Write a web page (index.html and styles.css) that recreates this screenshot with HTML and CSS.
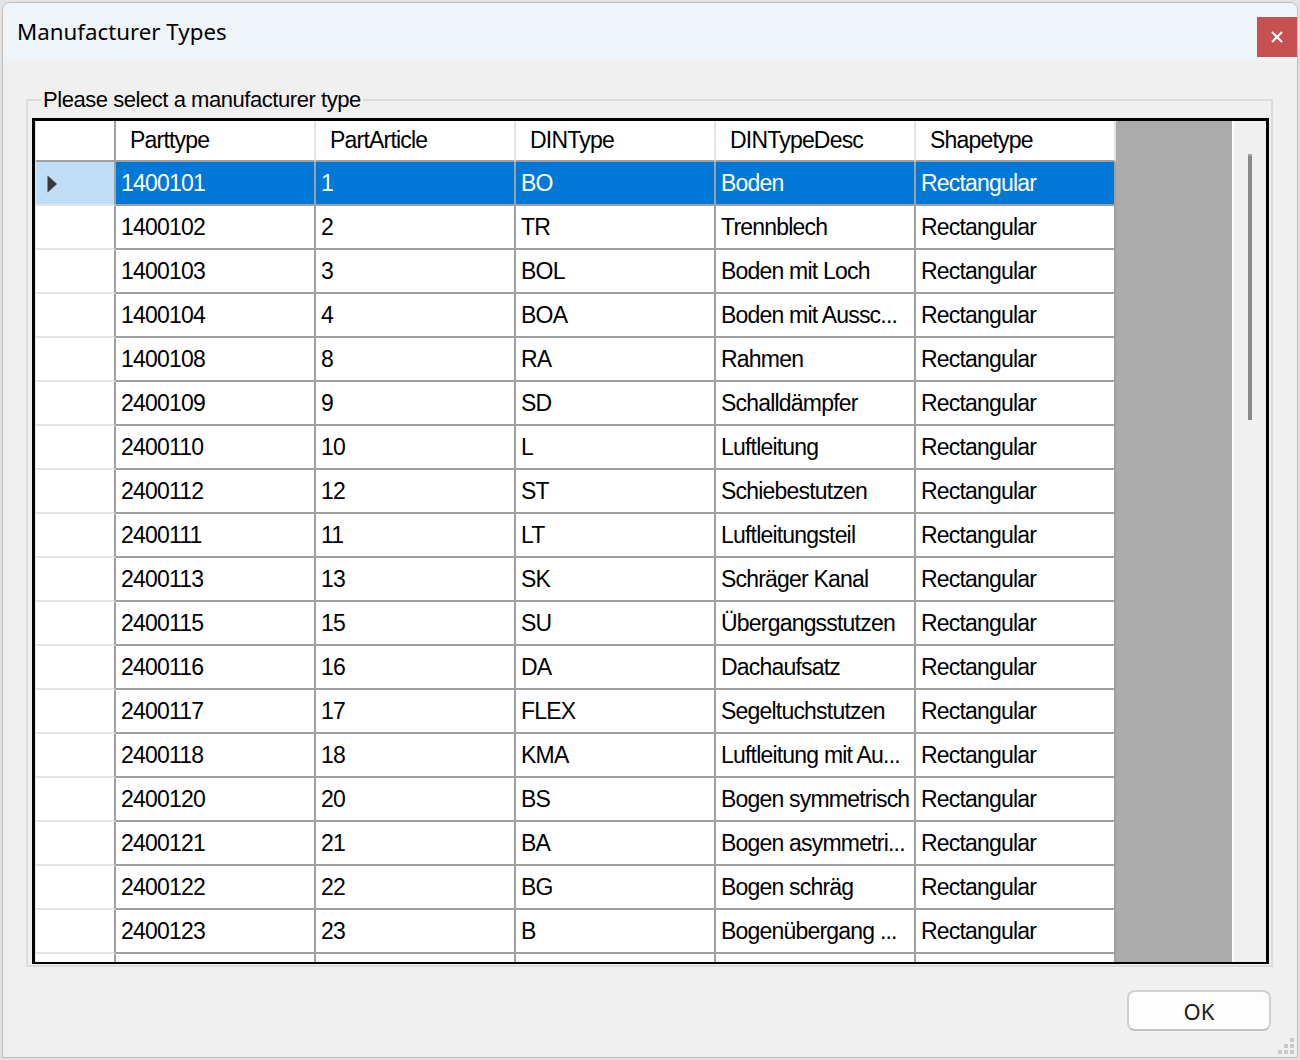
FILE: index.html
```html
<!DOCTYPE html>
<html lang="en">
<head>
<meta charset="utf-8">
<title>Manufacturer Types</title>
<link rel="stylesheet" href="styles.css">
</head>
<body>
<div class="window">
  <div class="titlebar">
    <div class="title">Manufacturer Types</div>
    <div class="close" aria-label="Close">
      <svg width="12" height="12" viewBox="0 0 12 12"><path d="M1 1 L11 11 M11 1 L1 11" stroke="#fff" stroke-width="2.2" fill="none"/></svg>
    </div>
  </div>
  <div class="content">
    <fieldset class="group">
      <legend>Please select a manufacturer type</legend>
      <div class="grid">
        <div class="table">
          <div class="row head">
            <div class="cell rh"></div>
            <div class="cell">Parttype</div>
            <div class="cell">PartArticle</div>
            <div class="cell">DINType</div>
            <div class="cell">DINTypeDesc</div>
            <div class="cell">Shapetype</div>
          </div>
          <div class="row sel">
            <div class="cell rh"><svg class="arrow" width="11" height="18" viewBox="0 0 11 18"><path d="M0.5 0.5 L10 9 L0.5 17.5 Z" fill="#3a3a3a"/></svg></div>
            <div class="cell">1400101</div><div class="cell">1</div><div class="cell">BO</div><div class="cell">Boden</div><div class="cell">Rectangular</div>
          </div>
          <div class="row"><div class="cell rh"></div><div class="cell">1400102</div><div class="cell">2</div><div class="cell">TR</div><div class="cell">Trennblech</div><div class="cell">Rectangular</div></div>
          <div class="row"><div class="cell rh"></div><div class="cell">1400103</div><div class="cell">3</div><div class="cell">BOL</div><div class="cell">Boden mit Loch</div><div class="cell">Rectangular</div></div>
          <div class="row"><div class="cell rh"></div><div class="cell">1400104</div><div class="cell">4</div><div class="cell">BOA</div><div class="cell">Boden mit Aussc...</div><div class="cell">Rectangular</div></div>
          <div class="row"><div class="cell rh"></div><div class="cell">1400108</div><div class="cell">8</div><div class="cell">RA</div><div class="cell">Rahmen</div><div class="cell">Rectangular</div></div>
          <div class="row"><div class="cell rh"></div><div class="cell">2400109</div><div class="cell">9</div><div class="cell">SD</div><div class="cell">Schalldämpfer</div><div class="cell">Rectangular</div></div>
          <div class="row"><div class="cell rh"></div><div class="cell">2400110</div><div class="cell">10</div><div class="cell">L</div><div class="cell">Luftleitung</div><div class="cell">Rectangular</div></div>
          <div class="row"><div class="cell rh"></div><div class="cell">2400112</div><div class="cell">12</div><div class="cell">ST</div><div class="cell">Schiebestutzen</div><div class="cell">Rectangular</div></div>
          <div class="row"><div class="cell rh"></div><div class="cell">2400111</div><div class="cell">11</div><div class="cell">LT</div><div class="cell">Luftleitungsteil</div><div class="cell">Rectangular</div></div>
          <div class="row"><div class="cell rh"></div><div class="cell">2400113</div><div class="cell">13</div><div class="cell">SK</div><div class="cell">Schräger Kanal</div><div class="cell">Rectangular</div></div>
          <div class="row"><div class="cell rh"></div><div class="cell">2400115</div><div class="cell">15</div><div class="cell">SU</div><div class="cell">Übergangsstutzen</div><div class="cell">Rectangular</div></div>
          <div class="row"><div class="cell rh"></div><div class="cell">2400116</div><div class="cell">16</div><div class="cell">DA</div><div class="cell">Dachaufsatz</div><div class="cell">Rectangular</div></div>
          <div class="row"><div class="cell rh"></div><div class="cell">2400117</div><div class="cell">17</div><div class="cell">FLEX</div><div class="cell">Segeltuchstutzen</div><div class="cell">Rectangular</div></div>
          <div class="row"><div class="cell rh"></div><div class="cell">2400118</div><div class="cell">18</div><div class="cell">KMA</div><div class="cell">Luftleitung mit Au...</div><div class="cell">Rectangular</div></div>
          <div class="row"><div class="cell rh"></div><div class="cell">2400120</div><div class="cell">20</div><div class="cell">BS</div><div class="cell">Bogen symmetrisch</div><div class="cell">Rectangular</div></div>
          <div class="row"><div class="cell rh"></div><div class="cell">2400121</div><div class="cell">21</div><div class="cell">BA</div><div class="cell">Bogen asymmetri...</div><div class="cell">Rectangular</div></div>
          <div class="row"><div class="cell rh"></div><div class="cell">2400122</div><div class="cell">22</div><div class="cell">BG</div><div class="cell">Bogen schräg</div><div class="cell">Rectangular</div></div>
          <div class="row"><div class="cell rh"></div><div class="cell">2400123</div><div class="cell">23</div><div class="cell">B</div><div class="cell">Bogenübergang ...</div><div class="cell">Rectangular</div></div>
          <div class="row"><div class="cell rh"></div><div class="cell"></div><div class="cell"></div><div class="cell"></div><div class="cell"></div><div class="cell"></div></div>
        </div>
        <div class="empty"></div>
        <div class="vscroll"><div class="thumb"></div></div>
      </div>
    </fieldset>
    <div class="actions">
      <button class="ok" type="button">OK</button>
    </div>
  </div>
  <svg class="grip" width="16" height="16" viewBox="0 0 16 16">
    <rect x="12" y="0" width="4" height="4" fill="#c8c8c8"/>
    <rect x="6" y="6" width="4" height="4" fill="#c8c8c8"/>
    <rect x="12" y="6" width="4" height="4" fill="#c8c8c8"/>
    <rect x="0" y="12" width="4" height="4" fill="#c8c8c8"/>
    <rect x="6" y="12" width="4" height="4" fill="#c8c8c8"/>
    <rect x="12" y="12" width="4" height="4" fill="#c8c8c8"/>
  </svg>
</div>
</body>
</html>
```

FILE: styles.css
```css
html, body {
  margin: 0;
  padding: 0;
}

body {
  width: 1300px;
  height: 1060px;
  overflow: hidden;
  background: #e2e2e2;
}

.window {
  position: relative;
  margin: 2px 0 0 2px;
  width: 1296px;
  height: 1056px;
  box-sizing: border-box;
  border: 1px solid #bdbdbd;
  border-radius: 8px 8px 0 0;
  background: #f0f0f0;
  display: flex;
  flex-direction: column;
  overflow: hidden;
}

.titlebar {
  flex: none;
  height: 59px;
  background: #eff4f9;
  display: flex;
  align-items: flex-start;
  justify-content: space-between;
}

.title {
  font-family: "Noto Sans", "Open Sans", sans-serif;
  font-size: 22.3px;
  line-height: 30px;
  color: #000;
  padding: 14px 0 0 14px;
}

.close {
  width: 40px;
  height: 40px;
  margin-top: 14px;
  background: #c75050;
  display: flex;
  align-items: center;
  justify-content: center;
}

.close svg {
  display: block;
}

.content {
  flex: 1;
  display: flex;
  flex-direction: column;
  padding-left: 23px;
}

.group {
  margin: 25px 0 0 0;
  width: 1247px;
  min-width: 0;
  box-sizing: border-box;
  border: 2px solid #dcdcdc;
  padding: 5px 2px 1px 4px;
}

.group legend {
  font-family: "Liberation Sans", Arial, sans-serif;
  font-size: 22px;
  line-height: 26px;
  letter-spacing: -0.45px;
  color: #000;
  margin-left: 9px;
  padding: 0 2px;
}

.grid {
  box-sizing: border-box;
  width: 1237px;
  height: 846px;
  border-style: solid;
  border-color: #000;
  border-width: 3px 3px 2px 3px;
  display: flex;
  overflow: hidden;
  background: #fff;
  font-family: "Liberation Sans", Arial, sans-serif;
  font-size: 23px;
  letter-spacing: -0.8px;
  color: #000;
}

.table {
  flex: none;
  width: 1081px;
  box-sizing: border-box;
  border-left: 1px solid #e3e3e3;
  overflow: hidden;
}

.row {
  display: flex;
}

.cell {
  flex: none;
  box-sizing: border-box;
  width: 200px;
  height: 44px;
  border-right: 2px solid #a0a0a0;
  border-bottom: 2px solid #a0a0a0;
  padding-left: 5px;
  display: flex;
  align-items: center;
  white-space: nowrap;
  overflow: hidden;
  background: #fff;
}

.cell.rh {
  width: 80px;
  padding-left: 11px;
  border-bottom-color: #e3e3e3;
}

.head .cell {
  height: 41px;
  padding-left: 14px;
  border-right-color: #e3e3e3;
}

.head .cell.rh {
  border-right-color: #a0a0a0;
  border-bottom-color: #a0a0a0;
}

.sel .cell {
  background: #0078d7;
  color: #fff;
}

.sel .cell.rh {
  background: #bfddf5;
}

.arrow {
  display: block;
  margin-top: 2px;
}

.empty {
  flex: none;
  width: 116px;
  background: #ababab;
}

.vscroll {
  flex: none;
  width: 34px;
  box-sizing: border-box;
  background: #f0f0f0;
  border-left: 2px solid #fff;
  padding: 33px 0 0 14px;
}

.thumb {
  width: 4px;
  height: 264px;
  background: #8a8a8a;
  border-top: 2px solid #a6a6a6;
}

.actions {
  display: flex;
  justify-content: flex-end;
  padding-right: 26px;
  margin-top: 23px;
}

.ok {
  width: 144px;
  height: 41px;
  box-sizing: border-box;
  border: 2px solid #d0d0d0;
  border-bottom-color: #c2c2c2;
  border-radius: 8px;
  background: #fdfdfd;
  font-family: "Noto Sans", "Open Sans", sans-serif;
  font-size: 22px;
  line-height: 30px;
  color: #1b1b1b;
  padding: 0;
}

.grip {
  position: absolute;
  right: 3px;
  bottom: 3px;
  display: block;
}
```
